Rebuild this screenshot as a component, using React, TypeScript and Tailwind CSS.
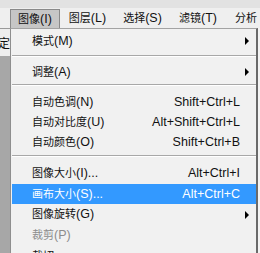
import React from "react";

type Row =
  | { kind: "sep"; h: string; line: string }
  | {
      kind: "item";
      zh: string;
      key: string;
      shortcut?: string;
      sub?: boolean;
      active?: boolean;
      disabled?: boolean;
      h: string;
    };

const rows: Row[] = [
  { kind: "item", zh: "模式", key: "(M)", sub: true, h: "h-[20px]" },
  { kind: "sep", h: "h-[11px]", line: "pt-[4px]" },
  { kind: "item", zh: "调整", key: "(A)", sub: true, h: "h-[20px]" },
  { kind: "sep", h: "h-[10px]", line: "pt-[2px]" },
  { kind: "item", zh: "自动色调", key: "(N)", shortcut: "Shift+Ctrl+L", h: "h-[20px]" },
  { kind: "item", zh: "自动对比度", key: "(U)", shortcut: "Alt+Shift+Ctrl+L", h: "h-[20px]" },
  { kind: "item", zh: "自动颜色", key: "(O)", shortcut: "Shift+Ctrl+B", h: "h-[20px]" },
  { kind: "sep", h: "h-[11px]", line: "pt-[3px]" },
  { kind: "item", zh: "图像大小", key: "(I)...", shortcut: "Alt+Ctrl+I", h: "h-[21px]" },
  { kind: "item", zh: "画布大小", key: "(S)...", shortcut: "Alt+Ctrl+C", active: true, h: "h-[20px]" },
  { kind: "item", zh: "图像旋转", key: "(G)", sub: true, h: "h-[21px]" },
  { kind: "item", zh: "裁剪", key: "(P)", disabled: true, h: "h-[21px]" },
  { kind: "item", zh: "裁切", key: "...", h: "h-[21px]" },
];

const menus = [
  { zh: "图像", key: "(I)", w: "w-[50px]", on: true },
  { zh: "图层", key: "(L)", w: "w-[55px]" },
  { zh: "选择", key: "(S)", w: "w-[55px]" },
  { zh: "滤镜", key: "(T)", w: "w-[56px]" },
  { zh: "分析", key: "", w: "w-[40px]" },
];

const font = "font-['Liberation_Sans','Noto_Sans_CJK_SC',sans-serif]";

export default function App() {
  return (
    <div className={`w-[260px] h-[253px] overflow-hidden bg-[#eeeeee] text-[#111] ${font}`}>
      {/* top strip + menu bar */}
      <div className="h-[8px] bg-[#e2e2e2]" />
      <div className="h-[20px] flex pl-[10px] bg-[#efefef]">
        {menus.map((m) => (
          <div
            key={m.zh}
            className={`${m.w} h-[19px] mt-[1px] flex items-center justify-center whitespace-nowrap shrink-0 ${
              m.on ? "bg-[#c6c6c6] border border-[#8a8a8a] border-b-0" : ""
            }`}
          >
            <span className="text-[11px] leading-none">{m.zh}</span>
            <span className="text-[12.5px] leading-none">{m.key}</span>
          </div>
        ))}
      </div>

      <div className="flex">
        {/* left panel strip */}
        <div className="w-[10px] shrink-0 flex flex-col">
          <div className="h-[28px] bg-[#eeeeee] border-t border-[#9a9a9a] overflow-hidden pt-[9px]">
            <div className="text-[12px] leading-none -ml-[2px]">定</div>
          </div>
          <div className="flex-1 bg-[#a7a7a7]" />
        </div>

        {/* dropdown */}
        <div className="w-[248px] shrink-0 h-[226px] bg-[#f1f1f1] border-l border-[#8e8e8e] border-r-2 border-r-[#6a6a6a] border-t border-t-[#a3a3a3] pt-[2px]">
          {rows.map((r, i) =>
            r.kind === "sep" ? (
              <div key={i} className={`${r.h} ${r.line}`}>
                <div className="h-[1px] bg-[#a8a8a8] ml-[1px]" />
                <div className="h-[1px] bg-white ml-[1px]" />
              </div>
            ) : (
              <div
                key={i}
                className={`${r.h} flex items-center ml-[1px] whitespace-nowrap ${
                  r.active ? "bg-[#3399ff] text-white" : r.disabled ? "text-[#8c8c8c]" : ""
                }`}
              >
                <div className="pl-[20px] flex-1 flex items-center">
                  <span className="text-[11px] leading-none">{r.zh}</span>
                  <span className="text-[12.5px] leading-none">{r.key}</span>
                </div>
                <span className="text-[12.5px] leading-none">{r.shortcut}</span>
                <div className="w-[16px] flex items-center pl-[5px]">
                  {r.sub && (
                    <div className="w-0 h-0 border-t-[4px] border-b-[4px] border-l-[4px] border-t-transparent border-b-transparent border-l-black" />
                  )}
                </div>
              </div>
            )
          )}
        </div>
        <div className="w-[2px] shrink-0 h-[226px] bg-[#f4f4f4]" />
      </div>
    </div>
  );
}
